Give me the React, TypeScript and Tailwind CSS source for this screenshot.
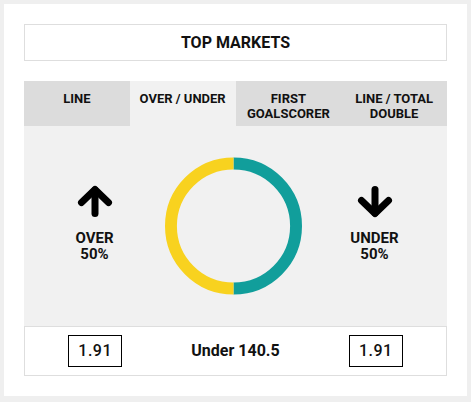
import React from "react";

const Arrow = ({ down = false }: { down?: boolean }) => (
  <svg width="36" height="33" viewBox="0 0 36 33" className={down ? "rotate-180" : ""}>
    <g fill="none" stroke="#000" strokeWidth="7" strokeLinecap="round" strokeLinejoin="round">
      <path d="M18 5 L18 28.5" />
      <path d="M4.5 17.5 L18 4.5 L31.5 17.5" />
    </g>
  </svg>
);

const Donut = () => {
  const r = 63;
  return (
    <svg width="138" height="138" viewBox="0 0 138 138">
      <path d={`M69 6 A${r} ${r} 0 0 1 69 132`} fill="none" stroke="#119e9b" strokeWidth="12" />
      <path d={`M69 132 A${r} ${r} 0 0 1 69 6`} fill="none" stroke="#f8d21f" strokeWidth="12" />
    </svg>
  );
};

export default function App() {
  const tabs = [
    { label: "LINE", active: false },
    { label: "OVER / UNDER", active: true },
    { label: "FIRST GOALSCORER", active: false },
    { label: "LINE / TOTAL DOUBLE", active: false },
  ];
  return (
    <div
      className="w-[471px] h-[402px] bg-[#efefef] p-[4px] text-[#111]"
      style={{ fontFamily: "Roboto, 'Liberation Sans', sans-serif" }}
    >
      <div className="w-[463px] h-[392px] bg-white px-[20px] pt-[20px]">
        <div className="h-[37px] border border-[#dedede] flex items-center justify-center text-[16px] font-bold">
          TOP MARKETS
        </div>
        <div className="mt-[20px] grid grid-cols-4 h-[45px]">
          {tabs.map((t) => (
            <div
              key={t.label}
              className={`${t.active ? "bg-[#f1f1f1]" : "bg-[#dcdcdc]"} flex justify-center pt-[10px] px-[4px] text-center text-[13px] leading-[15px] font-bold`}
            >
              {t.label === "FIRST GOALSCORER" ? (
                <span>FIRST<br />GOALSCORER</span>
              ) : t.label === "LINE / TOTAL DOUBLE" ? (
                <span>LINE / TOTAL<br />DOUBLE</span>
              ) : (
                <span>{t.label}</span>
              )}
            </div>
          ))}
        </div>
        <div className="bg-[#f1f1f1] h-[200px] grid grid-cols-3 items-center">
          <div className="flex flex-col items-center pb-[6px]">
            <Arrow />
            <div className="mt-[12px] text-[15px] leading-[16px] font-bold text-center">
              OVER<br />50%
            </div>
          </div>
          <div className="flex justify-center mr-[4px]">
            <Donut />
          </div>
          <div className="flex flex-col items-center pb-[6px] mr-[4px]">
            <Arrow down />
            <div className="mt-[12px] text-[15px] leading-[16px] font-bold text-center">
              UNDER<br />50%
            </div>
          </div>
        </div>
        <div className="h-[50px] border border-[#dedede] grid grid-cols-3 items-center">
          <div className="flex justify-center">
            <div className="w-[54px] h-[32px] border border-black flex items-center justify-center text-[16px] font-medium tracking-[0.5px]">
              1.91
            </div>
          </div>
          <div className="text-center text-[16px] font-bold">Under 140.5</div>
          <div className="flex justify-center">
            <div className="w-[54px] h-[32px] border border-black flex items-center justify-center text-[16px] font-medium tracking-[0.5px]">
              1.91
            </div>
          </div>
        </div>
      </div>
    </div>
  );
}
